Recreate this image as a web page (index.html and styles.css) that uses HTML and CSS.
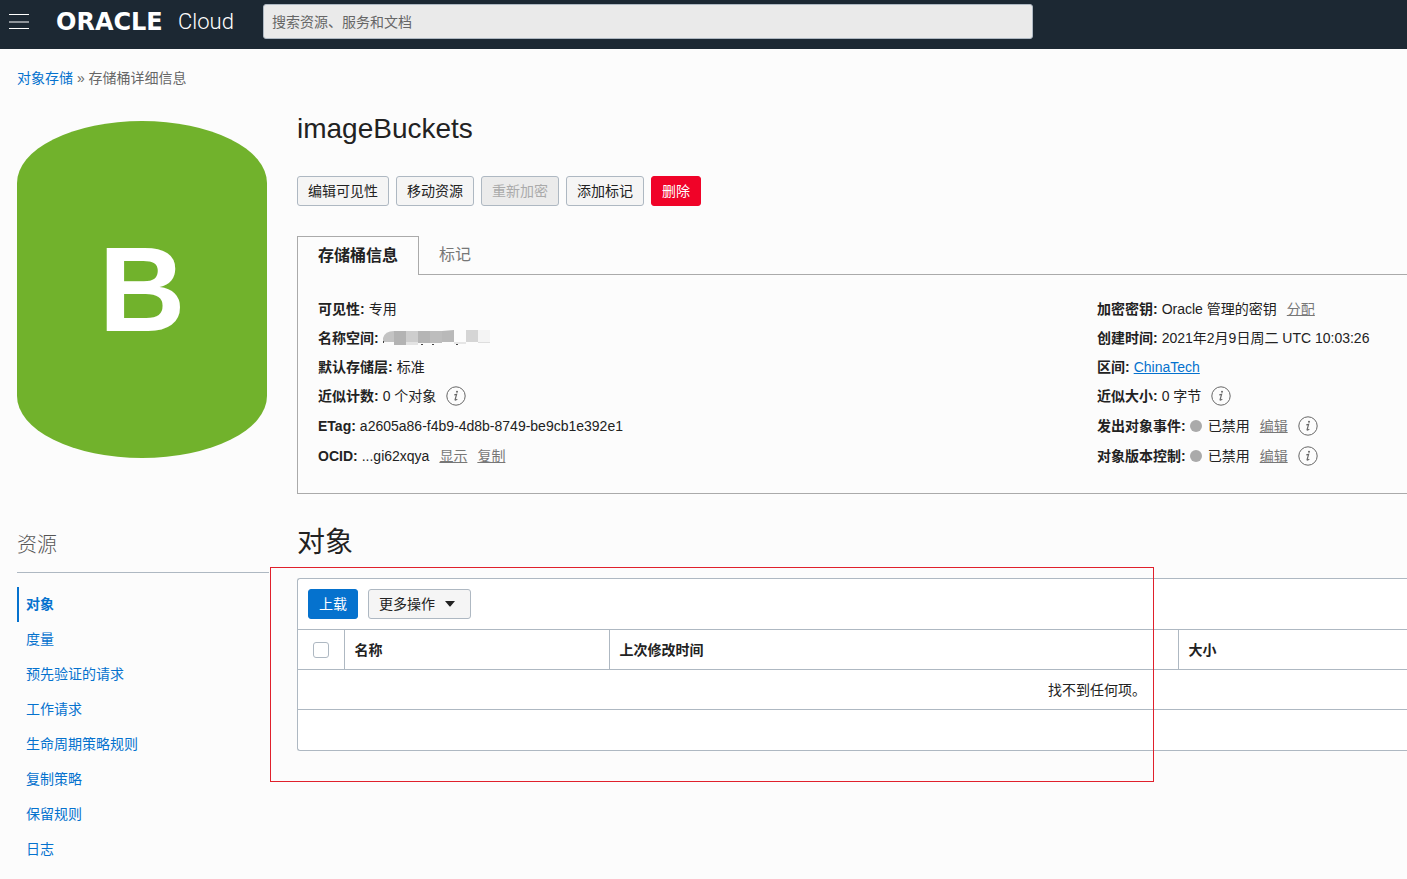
FILE: index.html
```html
<!DOCTYPE html>
<html lang="zh-CN">
<head>
<meta charset="utf-8">
<title>imageBuckets</title>
<link rel="stylesheet" href="styles.css">
</head>
<body>
<svg class="defs" aria-hidden="true">
  <symbol id="info" viewBox="0 0 20 20">
    <circle cx="10" cy="10" r="9.2" fill="none" stroke="currentColor"/>
    <circle cx="11" cy="5.8" r="1" fill="currentColor"/>
    <path d="M8.3 8.9 L10.6 8.4 L9.1 13.6 Q9 14.6 11.3 13.3" fill="none" stroke="currentColor" stroke-width="1.2"/>
  </symbol>
</svg>
<header class="topbar">
  <button class="menu" aria-label="菜单"><span class="bar"></span><span class="bar bar-mid"></span><span class="bar"></span></button>
  <a class="logo" href="#"><span class="logo-brand">ORACLE</span><span class="logo-product">Cloud</span></a>
  <input class="search" type="search" placeholder="搜索资源、服务和文档" aria-label="搜索资源、服务和文档">
</header>
<nav class="crumbs"><a href="#">对象存储</a> » 存储桶详细信息</nav>
<div class="page">
  <aside class="side">
    <div class="bucket">B</div>
    <h2 class="side-title">资源</h2>
    <nav class="side-nav">
      <a class="side-link active" href="#">对象</a>
      <a class="side-link" href="#">度量</a>
      <a class="side-link" href="#">预先验证的请求</a>
      <a class="side-link" href="#">工作请求</a>
      <a class="side-link" href="#">生命周期策略规则</a>
      <a class="side-link" href="#">复制策略</a>
      <a class="side-link" href="#">保留规则</a>
      <a class="side-link" href="#">日志</a>
    </nav>
  </aside>
  <main class="main">
    <h1 class="title">imageBuckets</h1>
    <div class="actions">
      <button class="btn">编辑可见性</button>
      <button class="btn">移动资源</button>
      <button class="btn" disabled>重新加密</button>
      <button class="btn">添加标记</button>
      <button class="btn danger">删除</button>
    </div>
    <div class="tabs" role="tablist">
      <button class="tab selected" role="tab" aria-selected="true">存储桶信息</button>
      <button class="tab" role="tab" aria-selected="false">标记</button>
      <span class="tab-rest"></span>
    </div>
    <section class="panel">
      <dl class="facts">
        <div class="fact"><dt>可见性:</dt><dd>专用</dd></div>
        <div class="fact"><dt>名称空间:</dt><dd>
          <svg class="mosaic" width="109" height="16" viewBox="0 0 109 16" aria-hidden="true">
            <path d="M0 12V8Q2 1 11 1V12Z" fill="#c3c3c3"/>
            <rect x="11" y="1" width="12" height="14" fill="#b3b3b3"/>
            <rect x="23" y="1" width="12" height="14" fill="#cdcdcd"/>
            <rect x="23" y="12" width="12" height="3" fill="#e3e3e3"/>
            <rect x="35" y="1" width="12" height="12" fill="#b5b5b5"/>
            <rect x="47" y="1" width="12" height="12" fill="#bdbdbd"/>
            <path d="M59 1L71 0V12H59Z" fill="#b9b9b9"/>
            <rect x="71" y="12" width="12" height="2" fill="#e6e6e6"/>
            <rect x="83" y="0" width="12" height="12" fill="#d5d5d5"/>
            <rect x="95" y="0" width="12" height="12" fill="#f4f4f4"/>
            <rect x="95" y="12" width="12" height="1" fill="#dedede"/>
            <path d="M0 11h1v2h-1zM38 14h2v1h-2zM49 14h2v1h-2zM73 14h2v1h-2z" fill="#444"/>
          </svg></dd></div>
        <div class="fact"><dt>默认存储层:</dt><dd>标准</dd></div>
        <div class="fact"><dt>近似计数:</dt><dd>0 个对象</dd><dd><svg class="info"><use href="#info"/></svg></dd></div>
        <div class="fact"><dt>ETag:</dt><dd>a2605a86-f4b9-4d8b-8749-be9cb1e392e1</dd></div>
        <div class="fact"><dt>OCID:</dt><dd>...gi62xqya</dd><dd><a class="quiet" href="#">显示</a></dd><dd><a class="quiet" href="#">复制</a></dd></div>
      </dl>
      <dl class="facts">
        <div class="fact"><dt>加密密钥:</dt><dd>Oracle 管理的密钥</dd><dd><a class="quiet" href="#">分配</a></dd></div>
        <div class="fact"><dt>创建时间:</dt><dd>2021年2月9日周二 UTC 10:03:26</dd></div>
        <div class="fact"><dt>区间:</dt><dd><a class="under" href="#">ChinaTech</a></dd></div>
        <div class="fact"><dt>近似大小:</dt><dd>0 字节</dd><dd><svg class="info"><use href="#info"/></svg></dd></div>
        <div class="fact"><dt>发出对象事件:</dt><dd class="state"><i class="dot"></i>已禁用</dd><dd><a class="quiet" href="#">编辑</a></dd><dd><svg class="info"><use href="#info"/></svg></dd></div>
        <div class="fact"><dt>对象版本控制:</dt><dd class="state"><i class="dot"></i>已禁用</dd><dd><a class="quiet" href="#">编辑</a></dd><dd><svg class="info"><use href="#info"/></svg></dd></div>
      </dl>
    </section>
    <h2 class="title section-title">对象</h2>
    <section class="objects">
      <div class="toolbar">
        <button class="btn primary">上载</button>
        <button class="btn more">更多操作<svg width="10" height="6" viewBox="0 0 10 6" aria-hidden="true"><path d="M0 0h10L5.8 5Q5 6 4.2 5Z" fill="#222"/></svg></button>
      </div>
      <table class="grid">
        <colgroup><col class="col-check"><col class="col-name"><col><col class="col-size"></colgroup>
        <thead><tr><th class="check"><input type="checkbox" aria-label="全选"></th><th>名称</th><th>上次修改时间</th><th>大小</th></tr></thead>
        <tbody><tr><td class="empty" colspan="3">找不到任何项。</td><td></td></tr></tbody>
        <tfoot><tr><td colspan="4"></td></tr></tfoot>
      </table>
      <div class="highlight"></div>
    </section>
  </main>
</div>
</body>
</html>
```
FILE: styles.css
```css
* { box-sizing: border-box; }
body {
  margin: 0;
  min-height: 100vh;
  background: #fcfcfc;
  color: #222;
  font: 14px/20px "Liberation Sans", "Noto Sans CJK SC", sans-serif;
}
button, input { font: inherit; color: inherit; }
a { color: #0572ce; text-decoration: none; }
h1, h2, dl, dd { margin: 0; }
.defs { display: none; }

.topbar { display: flex; height: 49px; padding: 4px 8px 0; background: #1c2833; }
.menu {
  display: flex; flex-direction: column; justify-content: space-between;
  width: 22px; height: 35px; padding: 10px 1px; border: 0; background: none;
}
.bar { display: block; width: 20px; height: 1px; background: #fff; }
.bar-mid { height: 2px; background: #8d9399; }
.logo { display: flex; width: 207px; margin-left: 26px; color: #fff; line-height: 36px; }
.logo-brand { width: 122px; font-family: "DejaVu Sans", sans-serif; font-weight: 700; font-size: 24px; }
.logo-product { font-family: Roboto, sans-serif; font-weight: 300; font-size: 22px; }
.search {
  flex: 0 1 770px; height: 35px; padding: 0 8px;
  border: 1px solid #aeb8c2; border-radius: 3px; background: #eaeaea;
}
.search::placeholder { color: #666; opacity: 1; }

.crumbs { padding: 19px 17px 0; color: #666; }

.page { display: flex; gap: 28px; padding-left: 17px; }
.side { flex: none; width: 252px; padding-top: 33px; }
.bucket {
  width: 250px; height: 337px; border-radius: 125px / 62px;
  background: #71b22c; color: #fff;
  font-weight: 700; font-size: 120px; line-height: 337px; text-align: center;
}
.side-title {
  margin-top: 72px; padding-bottom: 12px; border-bottom: 1px solid #aeb8c2;
  color: #555; font-weight: 300; font-size: 20px; line-height: 30px;
}
.side-nav { display: flex; flex-direction: column; padding-top: 14px; }
.side-link { padding-left: 9px; line-height: 35px; }
.side-link.active { padding-left: 7px; border-left: 2px solid #0572ce; font-weight: 700; }

.main { flex: 1; min-width: 0; padding-top: 21px; }
.title { font-weight: 400; font-size: 28px; line-height: 40px; }
.actions { display: flex; gap: 7px; margin-top: 27px; }
.btn {
  height: 30px; padding: 0 10px; border: 1px solid #aeb8c2; border-radius: 3px;
  background: #f5f5f5; line-height: 28px; white-space: nowrap;
}
.btn:disabled { background: #ebebeb; color: #aaa; }
.danger { border-color: #f00328; background: #f00328; color: #fff; }
.primary { border-color: #0572ce; background: #0572ce; color: #fff; }
.more { display: flex; align-items: center; gap: 10px; padding-right: 15px; }

.tabs { display: flex; height: 39px; margin-top: 30px; }
.tab {
  padding: 0 20px; border: 0; border-bottom: 1px solid #aaa;
  background: none; color: #777; font-size: 16px;
}
.tab.selected { border: 1px solid #aaa; border-bottom: 0; color: #222; font-weight: 700; }
.tab-rest { flex: 1; border-bottom: 1px solid #aaa; }

.panel {
  display: grid; grid-template-columns: 1fr 310px; padding: 19px 0 22px 20px;
  border: solid #aaa; border-width: 0 0 1px 1px;
}
.facts { display: grid; grid-template-rows: repeat(3, 29px) repeat(3, 30px); }
.fact { display: flex; align-items: center; gap: 10px; }
.fact dt { margin-right: -6px; font-weight: 700; }
.quiet { color: #777; text-decoration: underline; }
.under { text-decoration: underline; }
.mosaic, .info { display: block; }
.info { width: 20px; height: 20px; color: #666; }
.state { display: flex; align-items: center; gap: 6px; }
.dot { width: 12px; height: 12px; border-radius: 50%; background: #aaa; }

.section-title { margin-top: 29px; }
.objects {
  position: relative; margin-top: 15px;
  border: 1px solid #aeb8c2; border-right: 0; border-radius: 3px 0 0 3px; background: #fff;
}
.toolbar { display: flex; gap: 10px; padding: 10px; }
.grid { width: 100%; table-layout: fixed; border-collapse: collapse; }
.col-check { width: 46px; }
.col-name { width: 265px; }
.col-size { width: 229px; }
.grid th, .grid td { height: 40px; padding: 0 10px; border-top: 1px solid #aeb8c2; text-align: left; }
.grid th + th { border-left: 1px solid #aeb8c2; }
.grid .check { padding: 0 15px; }
.check input {
  display: block; appearance: none; width: 16px; height: 16px; margin: 0;
  border: 1px solid #aeb8c2; border-radius: 3px; background: #fff;
}
.grid .empty { padding-right: 32px; text-align: right; }
/* outline drawn over the table and the space around it */
.highlight {
  position: absolute; top: -12px; left: -28px; right: 253px; height: 215px;
  border: 1px solid #e0202c; pointer-events: none;
}
```
